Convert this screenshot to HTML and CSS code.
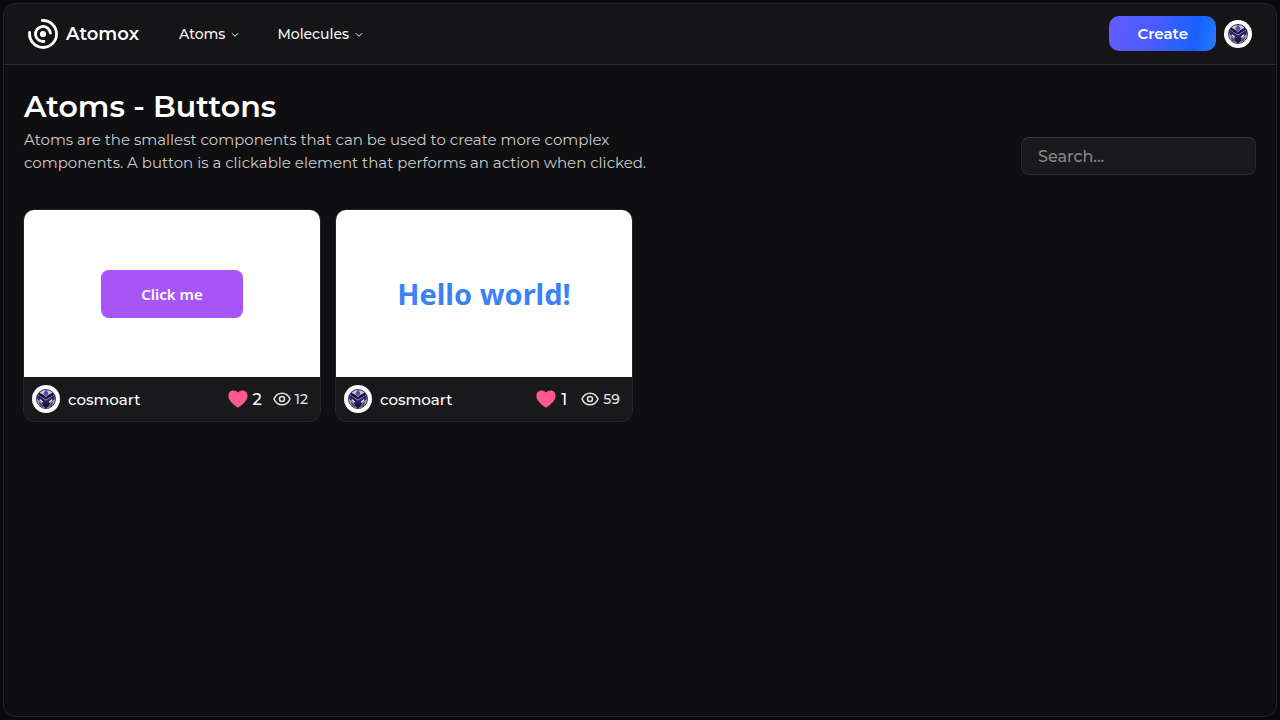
FILE: index.html
```html
<!DOCTYPE html>
<html lang="en">
<head>
<meta charset="utf-8">
<meta name="viewport" content="width=device-width, initial-scale=1">
<title>Atomox - Buttons</title>
<link rel="stylesheet" href="styles.css">
</head>
<body>
<svg class="sprite" aria-hidden="true">
  <symbol id="avatar" viewBox="0 0 28 28">
    <circle cx="14" cy="14" r="14" fill="#fff"/>
    <circle cx="14" cy="14" r="9.500" fill="#c6c3d6" stroke="#34333f" stroke-width="1"/>
    <path d="M5 9.500 12.300 14.200 14 15.500 15.700 14.200 23 9.500 22.600 14.400 17.600 18 14 20 10.400 18 5.400 14.400Z" fill="#2a1f68"/>
    <path d="M7.200 7.500 12 10.300 14 12.600 16 10.300 20.800 7.500 21.800 10 15.800 13.400 14 14.800 12.200 13.400 6.200 10Z" fill="#17142d"/>
    <path d="M14 4.500 16.600 8.500 14 12.300 11.400 8.500Z" fill="#5a44b0"/>
    <path d="M6 16 9.500 18.200 11.500 22.600 8.200 20.800ZM22 16 18.500 18.200 16.500 22.600 19.800 20.800Z" fill="#4a4468"/>
    <path d="M9.800 16.800 14 19.600 18.200 16.800 17.200 21 14 23.400 10.800 21Z" fill="#19143a"/>
    <path d="M7.800 14.600 10.800 17.200M20.200 14.600 17.200 17.200" stroke="#fff" stroke-width="1.200"/>
  </symbol>
  <symbol id="chevron" viewBox="0 0 8 8">
    <path d="M1.200 2.500 4 5.300 6.800 2.500" fill="none" stroke="currentColor" stroke-linecap="round" stroke-linejoin="round"/>
  </symbol>
  <symbol id="heart" viewBox="0 0 20 18">
    <path d="M10 17.700C8.300 16.400.4 11.500.4 5.700.4 2.600 2.600.4 5.300.4 7.400.4 9 1.200 10 2.500 11 1.200 12.600.4 14.700.4c2.700 0 4.900 2.200 4.900 5.300 0 5.800-7.900 10.700-9.600 12Z" fill="#ff5a8c"/>
  </symbol>
  <symbol id="eye" viewBox="0 0 18 14">
    <path d="M1 7C2.600 3.300 5.500 1.200 9 1.200S15.400 3.300 17 7C15.400 10.700 12.500 12.800 9 12.800S2.600 10.700 1 7Z" fill="none" stroke="currentColor" stroke-width="1.600"/>
    <circle cx="9" cy="7" r="2.500" fill="none" stroke="currentColor" stroke-width="1.600"/>
  </symbol>
</svg>
<div class="app">
  <header class="header">
    <a class="brand" href="#">
      <svg class="logo" viewBox="0 0 30 30" aria-hidden="true">
        <g fill="none" stroke="#fff" stroke-width="2.800" stroke-linecap="round">
          <path d="M14.300 1.500A13.500 13.500 0 1 1 1.600 13.500"/>
          <path d="M22.400 14.200A7.500 7.500 0 1 0 16 22.400"/>
        </g>
        <circle cx="15" cy="15" r="3.100" fill="#fff"/>
      </svg>
      <span>Atomox</span>
    </a>
    <nav class="nav">
      <button class="nav-item" type="button">Atoms <svg class="chevron" aria-hidden="true"><use href="#chevron"/></svg></button>
      <button class="nav-item" type="button">Molecules <svg class="chevron" aria-hidden="true"><use href="#chevron"/></svg></button>
    </nav>
    <div class="actions">
      <button class="create" type="button">Create</button>
      <a class="user" href="#" aria-label="Profile"><svg class="avatar"><use href="#avatar"/></svg></a>
    </div>
  </header>
  <main class="main">
    <div class="intro">
      <div class="intro-text">
        <h1 class="title">Atoms - Buttons</h1>
        <p class="description">Atoms are the smallest components that can be used to create more complex components. A button is a clickable element that performs an action when clicked.</p>
      </div>
      <input class="search" type="search" placeholder="Search..." aria-label="Search">
    </div>
    <section class="cards">
      <article class="card">
        <div class="preview"><button class="sample-button" type="button">Click me</button></div>
        <div class="card-footer">
          <a class="author" href="#"><svg class="avatar" aria-hidden="true"><use href="#avatar"/></svg>cosmoart</a>
          <div class="stats">
            <button class="likes" type="button" aria-label="Likes: 2"><svg class="heart"><use href="#heart"/></svg>2</button>
            <span class="views"><svg class="eye" aria-hidden="true"><use href="#eye"/></svg>12</span>
          </div>
        </div>
      </article>
      <article class="card">
        <div class="preview"><span class="sample-text">Hello world!</span></div>
        <div class="card-footer">
          <a class="author" href="#"><svg class="avatar" aria-hidden="true"><use href="#avatar"/></svg>cosmoart</a>
          <div class="stats">
            <button class="likes" type="button" aria-label="Likes: 1"><svg class="heart"><use href="#heart"/></svg>1</button>
            <span class="views"><svg class="eye" aria-hidden="true"><use href="#eye"/></svg>59</span>
          </div>
        </div>
      </article>
    </section>
  </main>
</div>
</body>
</html>
```

FILE: styles.css
```css
* { box-sizing: border-box; }
body {
  margin: 0;
  padding: 3px;
  min-height: 100vh;
  display: flex;
  background: #0a0a0c;
  color: #fff;
  font-family: Montserrat, Inter, sans-serif;
  font-weight: 500;
}
button, input { font: inherit; color: inherit; }
button { border: 0; padding: 0; background: none; cursor: pointer; }
a { color: inherit; text-decoration: none; }
svg { display: block; flex: none; }
.sprite { position: absolute; width: 0; height: 0; }
.app {
  flex: 1;
  min-width: 0;
  border: 1px solid #242426;
  border-radius: 12px;
  background: #0f0f11;
  overflow: hidden;
}
.header {
  display: flex;
  align-items: center;
  padding: 12px 24px 13px;
  background: #151517;
  border-bottom: 1px solid #29292b;
}
.brand {
  display: flex;
  align-items: center;
  gap: 8px;
  font-size: 18px;
  font-weight: 600;
}
.logo { width: 30px; height: 30px; }
.nav { display: flex; gap: 38px; margin-left: 40px; }
.nav-item {
  display: flex;
  align-items: center;
  gap: 6px;
  font-size: 14px;
  color: #f4f4f4;
}
.chevron { width: 8px; height: 8px; margin-top: 2px; }
.actions { display: flex; align-items: center; gap: 8px; margin-left: auto; }
.create {
  padding: 0 28px;
  height: 35px;
  border-radius: 10px;
  background: linear-gradient(100deg, #625bff, #4b5cff 40%, #1762ff 80%, #2878ff);
  font-size: 15px;
  font-weight: 600;
}
.avatar { width: 28px; height: 28px; }
.main { padding: 22px 20px 24px; }
.intro {
  display: flex;
  align-items: flex-end;
  justify-content: space-between;
  gap: 24px;
  margin-bottom: 35px;
}
.title { margin: 0; font-size: 30px; line-height: 40px; font-weight: 600; }
.description {
  margin: 0;
  padding: 1px 0;
  max-width: 640px;
  font-size: 15px;
  line-height: 23px;
  font-weight: 400;
  color: #cacacb;
}
.search {
  width: 235px;
  height: 38px;
  padding: 0 16px;
  border: 1px solid #29292b;
  border-top-color: #39393b;
  border-radius: 8px;
  background: #19191b;
  font-size: 16px;
  outline: 0;
}
.search::placeholder { color: #858587; opacity: 1; }
.cards {
  display: grid;
  grid-template-columns: repeat(auto-fill, minmax(280px, 1fr));
  gap: 16px;
}
.card {
  border-radius: 10px;
  overflow: hidden;
  background: #19191b;
  box-shadow: 0 0 0 1px #252527;
}
.preview {
  height: 167px;
  display: flex;
  align-items: center;
  justify-content: center;
  background: #fff;
  font-family: "Noto Sans", sans-serif;
}
.sample-button {
  padding: 12px 40px;
  border-radius: 8px;
  background: #a855f7;
  font-size: 15px;
  line-height: 24px;
  font-weight: 600;
}
.sample-text { color: #3b82f6; font-size: 29px; font-weight: 700; }
.card-footer {
  display: flex;
  align-items: center;
  justify-content: space-between;
  padding: 8px 12px 8px 8px;
}
.author { display: flex; align-items: center; gap: 8px; font-size: 15px; }
.stats { display: flex; align-items: center; gap: 11px; }
.likes { display: flex; align-items: center; gap: 5px; min-width: 34px; font-size: 16px; }
.heart { width: 20px; height: 18px; }
.views { display: flex; align-items: center; gap: 4px; font-size: 14px; color: #e0e0e0; }
.eye { width: 18px; height: 14px; }
```
